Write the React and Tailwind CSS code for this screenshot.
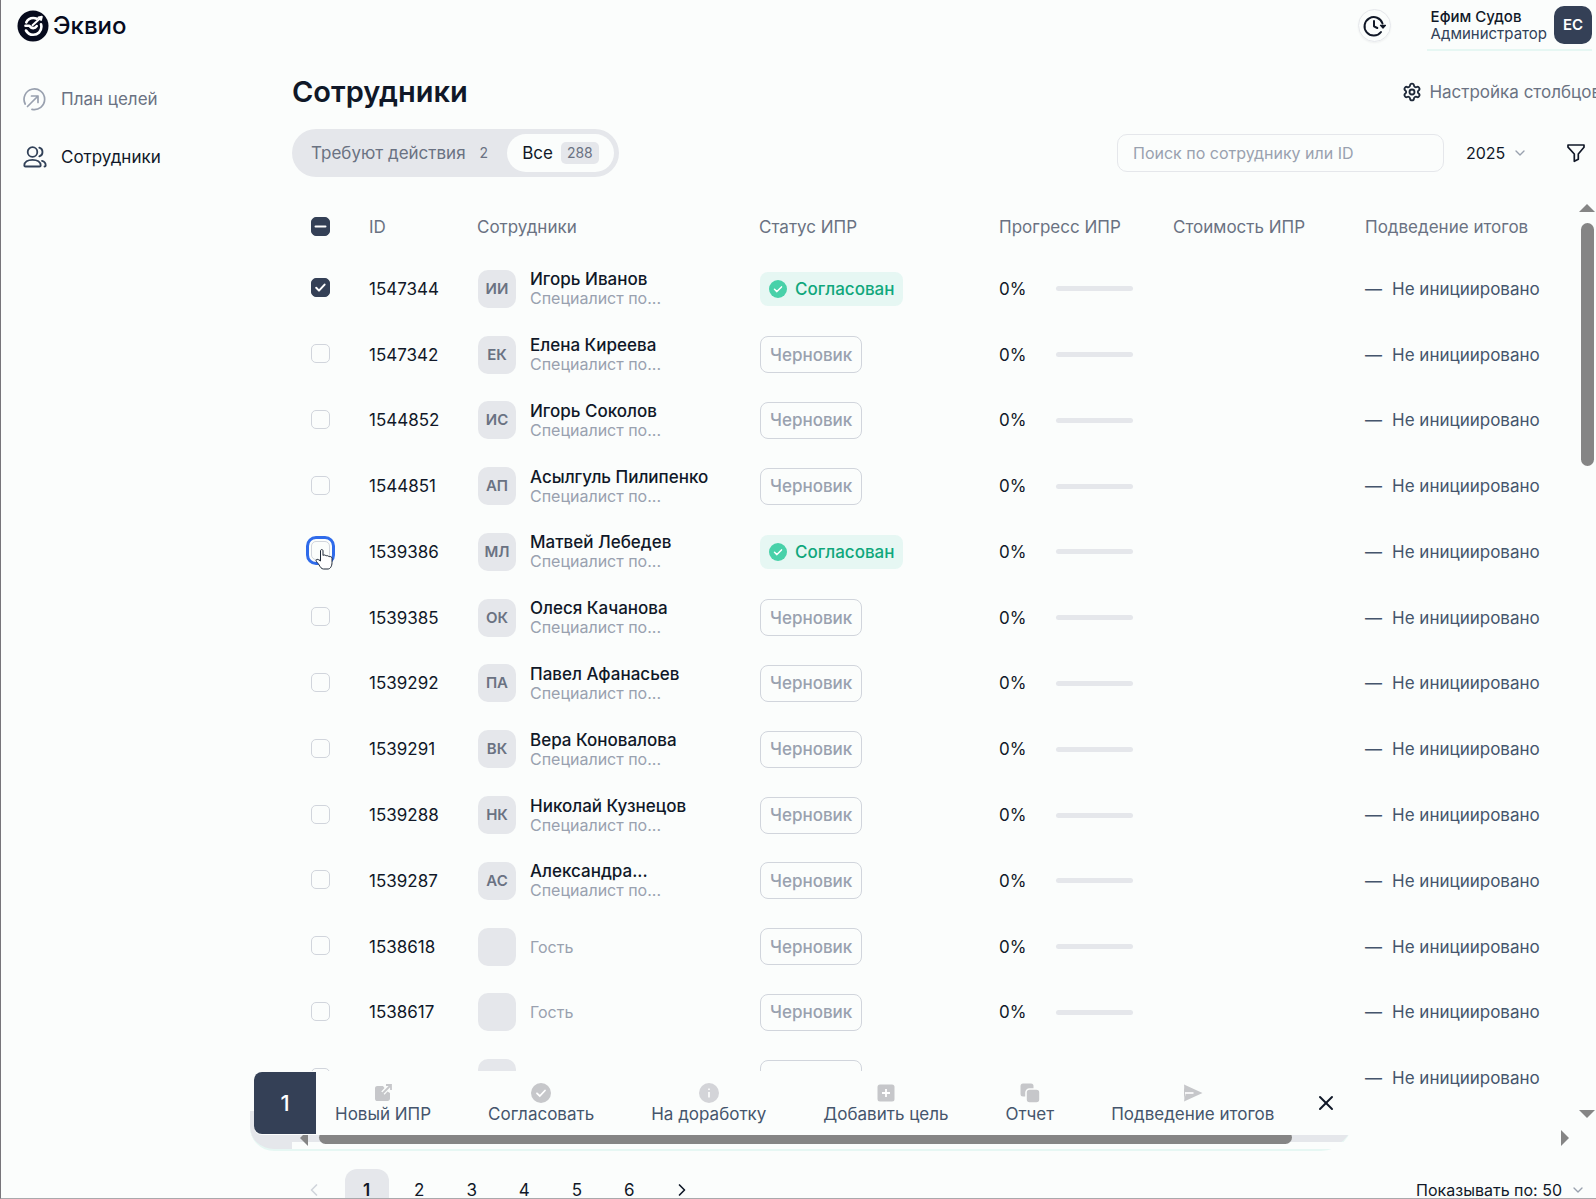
import React, { useState } from 'react';
import { ChevronDown, ChevronLeft, ChevronRight, Settings, X } from 'lucide-react';

const employees = [
  { id: '1547344', initials: 'ИИ', name: 'Игорь Иванов', approved: true },
  { id: '1547342', initials: 'ЕК', name: 'Елена Киреева' },
  { id: '1544852', initials: 'ИС', name: 'Игорь Соколов' },
  { id: '1544851', initials: 'АП', name: 'Асылгуль Пилипенко' },
  { id: '1539386', initials: 'МЛ', name: 'Матвей Лебедев', approved: true, hovered: true },
  { id: '1539385', initials: 'ОК', name: 'Олеся Качанова' },
  { id: '1539292', initials: 'ПА', name: 'Павел Афанасьев' },
  { id: '1539291', initials: 'ВК', name: 'Вера Коновалова' },
  { id: '1539288', initials: 'НК', name: 'Николай Кузнецов' },
  { id: '1539287', initials: 'АС', name: 'Александра...' },
  { id: '1538618', guest: true },
  { id: '1538617', guest: true },
  { id: '' },
];

const Logo = () => (
  <svg viewBox="0 0 32 32" className="w-8 h-8" fill="none">
    <circle cx="16" cy="16" r="15.5" fill="#070b1d" />
    <path d="M9.300 12.300C10.700 9.500 13.300 8 16.200 8c1.300 0 2.500.2 3.600.7" stroke="#fff" strokeWidth="2.600" strokeLinecap="round" />
    <path d="M9 20.500c1.500 2.700 4 4.300 7.200 4.300 4.700 0 8.200-3.400 8.200-8 0-.9-.1-1.700-.4-2.500" stroke="#fff" strokeWidth="2.600" strokeLinecap="round" />
    <path d="M8.500 15.800h3.800c1 1.500 2.300 2.300 3.900 2.300 1.500 0 2.700-.7 3.500-2" stroke="#fff" strokeWidth="2.600" strokeLinecap="round" strokeLinejoin="round" />
    <path d="M15.500 15.200l8-7.200M21.500 7.500l3.300-.8-.8 3.200" stroke="#fff" strokeWidth="2" strokeLinecap="round" strokeLinejoin="round" />
  </svg>
);

const GoalIcon = () => (
  <svg viewBox="0 0 24 24" className="w-6 h-6 text-gray-400" fill="none" stroke="currentColor" strokeWidth="1.7" strokeLinecap="round" strokeLinejoin="round">
    <path d="M2.200 17A10.300 10.300 0 1 1 9 22.300" />
    <path d="M4.500 19.500L15 9M8.500 9H15v6.500" />
  </svg>
);

const PeopleIcon = () => (
  <svg viewBox="0 0 24 24" className="w-6 h-6 text-slate-700" fill="none" stroke="currentColor" strokeWidth="1.8" strokeLinecap="round" strokeLinejoin="round">
    <circle cx="9.500" cy="7" r="4.800" />
    <path d="M1.300 20.500c0-3.500 3.500-5.700 8.200-5.700s8.200 2.200 8.200 5.700c0 .7-.5 1-1.200 1h-14c-.7 0-1.200-.3-1.200-1z" />
    <path d="M16.300 2.600c2 .5 3.200 2.300 3.200 4.400s-1.200 3.900-3.200 4.400M19 15.800c2.300.6 3.700 2.200 3.700 4.700 0 .7-.5 1-1.200 1" />
  </svg>
);

const HistoryIcon = () => (
  <svg viewBox="0 0 24 24" className="w-6 h-6" fill="none" stroke="#111827" strokeWidth="2" strokeLinecap="round" strokeLinejoin="round">
    <path d="M20.500 9.500A9.200 9.200 0 1 0 19 18" />
    <path d="M12 7v5.300l3.300 1.700" />
    <path d="M18.500 11.300h5L21 14z" fill="#111827" strokeWidth="1.200" />
  </svg>
);

const FilterIcon = () => (
  <svg viewBox="0 0 20 20" className="w-5 h-5" fill="none" stroke="#111827" strokeWidth="1.700" strokeLinejoin="round">
    <path d="M2 2h16v2.200L12.300 11v5.200L8.300 18.300V11L2 4.200z" />
  </svg>
);

const Triangle = ({ points, className }) => (
  <svg viewBox="0 0 16 16" className={className} fill="#858585" aria-hidden="true">
    <polygon points={points} />
  </svg>
);

const HandCursor = () => (
  <svg viewBox="0 0 18 22" className="absolute left-1 top-2 z-10 w-[18px] h-[22px] pointer-events-none" fill="#fff" stroke="#1f2937" strokeLinejoin="round">
    <path d="M5.500 12V2c0-2 2.500-2 2.500 0v4.500c.5-.8 2.800-.7 3 .5.600-.7 2.800-.3 3 .8.800-.6 3-.2 3 1.400v4.300c0 4-2 6.500-4 6.500H8.500c-2 0-3.300-2-4.500-4.200C3 14 1 12.500 1 11.500c0-1.200 1.700-1.500 2.700-.7z" />
  </svg>
);

const Checkbox = ({ checked, mixed, hovered, onChange, label }) => (
  <span className="relative block w-[19px] h-[19px]">
    <input
      type="checkbox"
      aria-label={label}
      checked={checked}
      onChange={onChange}
      className={`block w-[19px] h-[19px] appearance-none rounded-[5px] border border-gray-300 checked:border-[#344056] checked:bg-[#344056] ${
        hovered ? 'outline-3 outline-offset-2 outline-[#2f6bea]' : ''
      }`}
    />
    {checked && (
      <svg viewBox="0 0 19 19" className="absolute inset-0 pointer-events-none" fill="none" stroke="#fff" strokeWidth="2" strokeLinecap="round" strokeLinejoin="round">
        <path d={mixed ? 'M4.500 9.500h10' : 'M5.200 9.800l2.800 2.800 5.600-6'} />
      </svg>
    )}
    {hovered && <HandCursor />}
  </span>
);

const Status = ({ approved }) =>
  approved ? (
    <span className="inline-flex items-center gap-2 h-[34px] px-[9px] rounded-lg bg-[#e6f7f3] text-[#10a77c] font-medium">
      <svg viewBox="0 0 18 18" className="w-[18px] h-[18px]" fill="none">
        <circle cx="9" cy="9" r="9" fill="#48d1a9" />
        <path d="M5.500 9.300l2.400 2.300 4.600-4.700" stroke="#fff" strokeWidth="1.500" strokeLinecap="round" strokeLinejoin="round" />
      </svg>
      Согласован
    </span>
  ) : (
    <span className="inline-flex items-center h-[37px] px-[9px] rounded-lg border border-gray-300 text-gray-400 font-medium">
      Черновик
    </span>
  );

const actions = [
  {
    label: 'Новый ИПР',
    icon: (
      <>
        <path d="M10 3H4.500C2.500 3 2 4 2 5.500v10C2 17.500 3 18 4.500 18h10c1.500 0 2.500-1 2.500-2.500V10l-2.500-1.500-3 3.200-3.200-3.200L11.500 5z" />
        <path d="M9.500 10.500L17.500 2.500M13 2h5v5" fill="none" stroke="#c6c7ca" strokeWidth="1.800" />
      </>
    ),
  },
  {
    label: 'Согласовать',
    icon: (
      <>
        <circle cx="10" cy="10" r="10" />
        <path d="M6 10.300l2.800 2.700 5.200-5.500" fill="none" stroke="#fff" strokeWidth="1.800" strokeLinecap="round" />
      </>
    ),
  },
  {
    label: 'На доработку',
    icon: (
      <>
        <circle cx="10" cy="10" r="10" fill="#d3d4d8" />
        <path d="M10 9v5.500M10 5.500v1.500" stroke="#fff" strokeWidth="1.600" />
      </>
    ),
  },
  {
    label: 'Добавить цель',
    icon: (
      <>
        <rect x="1.500" y="1.500" width="17" height="17" rx="2.500" />
        <path d="M10 6v8M6 10h8" stroke="#fff" strokeWidth="1.800" />
      </>
    ),
  },
  {
    label: 'Отчет',
    icon: (
      <>
        <rect x="0.500" y="0.500" width="13" height="13" rx="2.500" />
        <rect x="6" y="6" width="14" height="14" rx="3.500" stroke="#fbfdfc" strokeWidth="1.600" />
      </>
    ),
  },
  {
    label: 'Подведение итогов',
    icon: (
      <>
        <path d="M1 1.500L19.500 10 1 18.500l1.500-7z" />
        <path d="M1 1.500L2.500 9 1 18.500z" />
        <path d="M2 10h8.500" stroke="#fff" strokeWidth="1.600" />
      </>
    ),
  },
];

const App = () => {
  const [selected, setSelected] = useState(['1547344']);
  const [search, setSearch] = useState('');

  const toggle = (id) =>
    setSelected((prev) => (prev.includes(id) ? prev.filter((item) => item !== id) : [...prev, id]));

  return (
    <div className="flex flex-col h-screen overflow-hidden border-l border-l-[#77757a] border-b border-b-[#a9a9ac] bg-[#fbfdfc] font-['Inter',sans-serif] text-[17px] leading-5 text-gray-900">
      {/* Header */}
      <header className="flex shrink-0 items-center justify-between h-[51px] pl-4 pr-1">
        <a href="#" className="flex items-center gap-1 text-[24px] font-medium text-[#070b1d]">
          <Logo />
          Эквио
        </a>
        <div className="flex items-center">
          <button aria-label="История" className="flex items-center justify-center w-[33px] h-[33px] mr-9 rounded-full border border-gray-200 shadow-xs">
            <HistoryIcon />
          </button>
          <div className="flex items-center gap-[7px] h-[51px] pl-1 border-b-2 border-[#e6f7f3]">
            <div className="text-[15px] leading-[17px]">
              <div className="font-medium">Ефим Судов</div>
              <div className="text-slate-700">Администратор</div>
            </div>
            <div className="flex items-center justify-center w-[38px] h-[38px] rounded-[10px] bg-[#344056] text-[15px] font-semibold text-white">
              ЕС
            </div>
          </div>
        </div>
      </header>

      <div className="flex flex-1 min-h-0">
        {/* Sidebar */}
        <nav className="flex flex-col shrink-0 w-[291px] pl-[22px] pt-9 gap-[34px]">
          <a href="#" className="flex items-center gap-[14px] text-gray-500">
            <GoalIcon />
            План целей
          </a>
          <a href="#" className="flex items-center gap-[14px]">
            <PeopleIcon />
            Сотрудники
          </a>
        </nav>

        <main className="relative flex-1 min-w-0">
          <div className="flex items-center justify-between h-11 mt-[19px]">
            <h1 className="text-[29px] leading-9 font-semibold">Сотрудники</h1>
            <button className="flex items-center gap-[7px] shrink-0 -mr-[5px] text-gray-500">
              <Settings className="w-5 h-5 text-gray-800" strokeWidth={2.2} />
              Настройка столбцов
            </button>
          </div>

          {/* Tabs and filters */}
          <div className="flex items-center justify-between h-12 mt-[15px] pr-[10px]">
            <div className="flex h-12 p-[5px] rounded-full bg-gray-200">
              <button className="flex items-center gap-[14px] pl-[14px] pr-[19px] text-gray-500">
                Требуют действия
                <span className="text-[14px]">2</span>
              </button>
              <button className="flex items-center gap-2 px-[15px] rounded-full bg-[#fbfdfc]">
                Все
                <span className="px-[6px] rounded-[5px] bg-gray-200 text-[14px] leading-[22px] text-gray-500">288</span>
              </button>
            </div>
            <div className="flex items-center">
              <input
                type="text"
                aria-label="Поиск по сотруднику или ID"
                value={search}
                onChange={(e) => setSearch(e.target.value)}
                placeholder="Поиск по сотруднику или ID"
                className="w-[327px] h-[38px] px-[15px] rounded-[10px] border border-gray-200 text-[16px] placeholder-gray-400 outline-none"
              />
              <div className="relative ml-[22px] mr-[38px] text-[16px]">
                <select aria-label="Год" className="w-[62px] appearance-none bg-transparent">
                  <option>2025</option>
                </select>
                <ChevronDown className="absolute right-0 top-1/2 -translate-y-1/2 w-4 h-4 text-gray-400 pointer-events-none" />
              </div>
              <button aria-label="Фильтр">
                <FilterIcon />
              </button>
            </div>
          </div>

          {/* Employees table */}
          <div className="flex mt-5">
            <div className="flex-1 pb-[11px]">
              <table className="table-fixed w-full h-[914px] text-left">
                <colgroup>
                  <col className="w-[77px]" />
                  <col className="w-[108px]" />
                  <col className="w-[282px]" />
                  <col className="w-[240px]" />
                  <col className="w-[174px]" />
                  <col className="w-[192px]" />
                  <col />
                </colgroup>
                <thead className="text-gray-500">
                  <tr className="h-[59px]">
                    <th className="pl-[19px]">
                      <Checkbox label="Выбрать всех" mixed checked={selected.length > 0} onChange={() => setSelected([])} />
                    </th>
                    <th className="font-normal">ID</th>
                    <th className="font-normal">Сотрудники</th>
                    <th className="font-normal">Статус ИПР</th>
                    <th className="font-normal">Прогресс ИПР</th>
                    <th className="font-normal">Стоимость ИПР</th>
                    <th className="font-normal">Подведение итогов</th>
                  </tr>
                </thead>
                <tbody>
                  {employees.map((item) => (
                    <tr key={item.id}>
                      <td className="pl-[19px] pb-[2px]">
                        <Checkbox
                          label="Выбрать сотрудника"
                          checked={selected.includes(item.id)}
                          hovered={item.hovered}
                          onChange={() => toggle(item.id)}
                        />
                      </td>
                      <td>{item.id}</td>
                      <td className="pl-px">
                        <div className="flex items-center gap-[14px]">
                          <span className="flex items-center justify-center w-[38px] h-[38px] rounded-[10px] bg-gray-200 text-[15px] font-semibold text-gray-500">
                            {item.initials}
                          </span>
                          {item.guest && <span className="text-[16px] text-gray-400">Гость</span>}
                          {item.name && (
                            <div className="leading-[19px]">
                              <div className="font-medium">{item.name}</div>
                              <div className="text-[16px] leading-[18px] text-gray-400">Специалист по...</div>
                            </div>
                          )}
                        </div>
                      </td>
                      <td className="pl-px">
                        <Status approved={item.approved} />
                      </td>
                      <td>
                        <div className="flex items-center">
                          <span className="w-[57px]">0%</span>
                          <span className="w-[77px] h-[5px] rounded-full bg-gray-200" />
                        </div>
                      </td>
                      <td />
                      <td className="text-slate-600">
                        <div className="flex items-center gap-[10px]">
                          <span>—</span>
                          Не инициировано
                        </div>
                      </td>
                    </tr>
                  ))}
                </tbody>
              </table>
            </div>
            <div className="flex flex-col items-center shrink-0 w-4 mr-px pt-[3px]">
              <Triangle points="0,12 16,12 8,4" className="w-4 h-4" />
              <div className="w-[13px] h-[243px] mt-[7px] rounded-full bg-[#858585]" />
              <Triangle points="0,4 16,4 8,12" className="w-4 h-4 mt-auto" />
            </div>
          </div>

          {/* Horizontal scroll */}
          <div className="relative z-10 flex items-center justify-between h-[15px] mt-2 pl-1 pr-[23px]">
            <Triangle points="12,0 12,16 4,8" className="w-4 h-4" />
            <div className="w-[973px] h-[13px] ml-[7px] mr-auto rounded-full bg-[#858585]" />
            <Triangle points="4,0 4,16 12,8" className="w-4 h-4" />
          </div>

          {/* Pagination */}
          <div className="flex items-start justify-between mt-6 pr-[10px]">
            <div className="flex justify-between w-[412px]">
              <button aria-label="Назад" className="flex items-center justify-center w-11 h-[42px] text-gray-300">
                <ChevronLeft className="w-5 h-5" />
              </button>
              {[1, 2, 3, 4, 5, 6].map((page) => (
                <button key={page} className={page === 1 ? 'w-11 h-[42px] rounded-xl bg-gray-200 font-semibold' : 'w-11 h-[42px]'}>
                  {page}
                </button>
              ))}
              <button aria-label="Вперед" className="flex items-center justify-center w-11 h-[42px]">
                <ChevronRight className="w-5 h-5" />
              </button>
            </div>
            <button className="flex items-center gap-2 h-[42px] text-[16px]">
              Показывать по: 50
              <ChevronDown className="w-4 h-4 text-gray-400" />
            </button>
          </div>

          {/* Shadow under the bulk actions */}
          <div className="absolute bottom-[47px] -left-[42px] w-[1103px] h-10 rounded-bl-[24px] rounded-br-[32px] border-b-2 border-[#e6f7f3] bg-gray-200">
            <div className="absolute bottom-0 left-[42px] right-0 h-[7px] bg-[#fbfdfc]" />
          </div>

          {/* Bulk actions */}
          <div className="absolute z-20 bottom-[63px] -left-[38px] flex h-16 w-[1103px] rounded-l-lg bg-[#fbfdfc]">
            <div className="flex items-center justify-center w-[62px] h-[62px] mt-px rounded-l-lg bg-[#344056] text-[22px] font-medium text-white">
              {selected.length}
            </div>
            <div className="flex items-center gap-[57px] pl-[19px] text-slate-600">
              {actions.map((action) => (
                <button key={action.label} className="flex flex-col items-center gap-px whitespace-nowrap">
                  <svg viewBox="0 0 20 20" className="w-5 h-5" fill="#c6c7ca" aria-hidden="true">
                    {action.icon}
                  </svg>
                  {action.label}
                </button>
              ))}
            </div>
            <button aria-label="Закрыть" className="ml-10" onClick={() => setSelected([])}>
              <X className="w-6 h-6" />
            </button>
          </div>
        </main>
      </div>
    </div>
  );
};

export default App;
